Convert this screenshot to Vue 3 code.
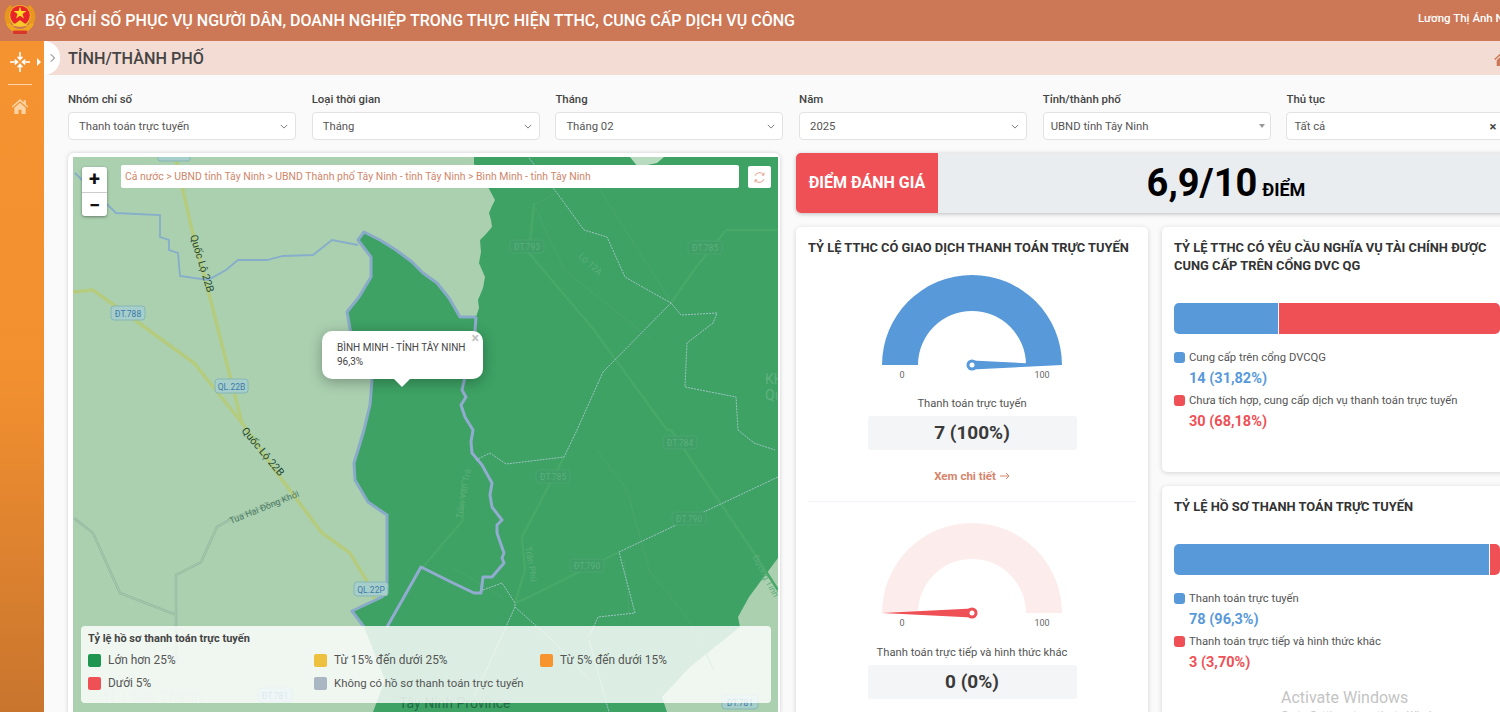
<template>
  <div class="page">
    <header class="topbar">
      <svg class="emblem" viewBox="0 0 32 32">
        <path d="M3 22C-1 15 0 7 6 2l3 2c-5 5-5 11-2 16zM29 22c4-7 3-15-3-20l-3 2c5 5 5 11 2 16z" fill="#e9961f" />
        <path d="M2 21c3 6 8 9 14 9s11-3 14-9l-4-1c-3 4-6 6-10 6s-7-2-10-6z" fill="#f0a61e" />
        <circle cx="16" cy="13" r="11" fill="#f2b324" />
        <circle cx="16" cy="12.500" r="9.800" fill="#e8232a" />
        <path d="M16 3.500l1.500 4.600h4.900l-3.900 2.900 1.500 4.600-4-2.900-4 2.900 1.500-4.600-3.900-2.900h4.900z" fill="#fbd924" />
        <path d="M8 23l8-6 8 6z" fill="#f8c52b" />
        <rect x="9" y="27.500" width="14" height="3.500" rx="1" fill="#d8362a" />
      </svg>
      <h1 class="topbar-title">BỘ CHỈ SỐ PHỤC VỤ NGƯỜI DÂN, DOANH NGHIỆP TRONG THỰC HIỆN TTHC, CUNG CẤP DỊCH VỤ CÔNG</h1>
      <div class="topbar-user">Lương Thị Ánh N</div>
    </header>

    <div class="layout">
      <aside class="sidebar">
        <div class="side-item">
          <svg class="side-icon" viewBox="0 0 20 20" fill="none" stroke="#fff" stroke-width="1.500">
            <path d="M10 0v7M7.600 4.800L10 7.600l2.400-2.800M10 20v-7M7.600 15.200l2.400-2.800 2.400 2.800M0 10h7M4.800 7.600L7.600 10l-2.800 2.400M20 10h-7M15.200 7.600L12.400 10l2.800 2.400" />
          </svg>
          <span class="side-caret"></span>
        </div>
        <div class="side-line"></div>
        <svg class="side-home" viewBox="0 0 20 18">
          <path d="M10 0L0 9l1.200 1.300L10 2.600l8.800 7.700L20 9l-3-2.700V1.500h-2.600v2.500zM3.200 10.600V18h5v-5h3.600v5h5v-7.400L10 4.600z" fill="#fcd3a4" />
        </svg>
      </aside>

      <main class="main">
        <div class="subbar">
          <span class="toggle">
            <svg viewBox="0 0 8 12" width="6" height="10" fill="none" stroke="#666" stroke-width="1.300"><path d="M1 1l5 5-5 5" /></svg>
          </span>
          <h2 class="subbar-title">TỈNH/THÀNH PHỐ</h2>
          <svg class="subbar-home" viewBox="0 0 20 18">
            <path d="M10 0L0 9l1.200 1.300L10 2.600l8.800 7.700L20 9l-3-2.700V1.500h-2.600v2.500zM3.200 10.600V18h5v-5h3.600v5h5v-7.400L10 4.600z" fill="#cc7755" />
          </svg>
        </div>

        <div class="content">
          <section class="filters">
            <div v-for="f in filters" :key="f.label" class="filter">
              <label class="filter-label">{{ f.label }}</label>
              <div class="select" :class="'select-' + f.kind">
                <span>{{ f.value }}</span>
                <svg v-if="f.kind === 'chev'" viewBox="0 0 10 6" width="8" height="5" fill="none" stroke="#777" stroke-width="1.200"><path d="M1 1l4 4 4-4" /></svg>
                <span v-else-if="f.kind === 'tri'" class="tri"></span>
                <span v-else class="clear">×</span>
              </div>
            </div>
          </section>

          <section class="panels">
            <div class="map-card">
              <div class="map">
                <svg class="map-svg" viewBox="73 157 705 555">
                  <rect x="73" y="157" width="705" height="555" fill="#abd0b0" />
                  <g fill="none" stroke="#b5cc7e" stroke-width="3.500">
                    <path d="M176 160L192 230 208 290 242 423 277 473 322 533 350 553 368 583 387 627" />
                    <path d="M73 292L93 290 139 323 194 363 242 423" />
                  </g>
                  <g fill="none" stroke="#93b8a0" stroke-width="2.500">
                    <path d="M74 518L93 533 120 593 176 615 176 575 201 562 217 527 231 519 290 497" />
                    <path d="M176 615V660" />
                  </g>
                  <g fill="none" stroke="#abd0b0" stroke-width="0.800">
                    <path d="M74 518L93 533 120 593 176 615 176 575 201 562 217 527 231 519 290 497" />
                    <path d="M176 615V660" />
                  </g>
                  <path d="M75 173L116 213 160 215 160 237 169 240 169 250 178 253 180 276 208 280 226 270 238 260 267 260 283 256 313 255 332 240 358 245" fill="none" stroke="#86aecb" stroke-width="1.800" />

                  <path d="M474 157L474 164 480 172 488 187 495 200 492 206 489 213 491 220 492 227 486 234 480 240 481 252 479 263 485 277 483 288 478 300 479 308 476 317 460 317 449 298 437 283 423 273 412 262 396 250 380 240 364 232 358 240 371 257 371 277 359 297 347 312 352 340 372 380 370 405 364 430 354 463 355 480 368 502 387 515 387 587 382 597 352 611 364 627 374 652 385 680 373 712 667 712 662 697 690 667 740 627 738 617 749 597 778 558V157z" fill="#3da264" />
                  <path d="M630 157h34l-7 6-19 4z" fill="#b9dcc1" />

                  <g fill="none" stroke="#47a868" stroke-width="2.500">
                    <path d="M534 203L529 253 594 330 667 430 671 430 754 553 778 590" />
                    <path d="M694 270L671 303M726 230l-32 40M726 230h52" />
                    <path d="M564 457L522 537 525 570 515 603" />
                    <path d="M619 552L529 597 515 603" />
                    <path d="M463 520L423 567M463 520l-1 -40" />
                  </g>
                  <g fill="none" stroke="#4aa56c" stroke-width="1">
                    <path d="M534 205l22-12M534 205l30 65 88 70M600 190l70 110" />
                    <path d="M597 450l30 40 22 80 40 50 25 50" />
                    <path d="M452 567l50 30M624 560l6 60" />
                  </g>

                  <g fill="none" stroke="#92abd0" stroke-width="3" stroke-linejoin="round">
                    <path d="M476 317L474 345 470 355 462 390 466 397 461 405 465 417 473 430 471 442 472 453 482 465 492 483 490 495 492 507 502 520 497 525 497 533 504 553 502 558 504 563 492 577 483 577 481 593 474 593 451 582 421 567 387 627" />
                  </g>
                  <path d="M476 317L460 317 449 298 437 283 423 273 412 262 396 250 380 240 364 232 358 240 371 257 371 277 359 297 347 312 352 340 372 380 370 405 364 430 354 463 355 480 368 502 387 515 387 587 382 597 352 611 364 627" fill="none" stroke="#8aaac9" stroke-width="3" stroke-linejoin="round" />

                  <g fill="none" stroke="#a0c4c6" stroke-width="1" stroke-dasharray="2 1">
                    <path d="M529 158L557 193 584 230 607 237 625 277 653 293 671 303 681 315 717 313 713 323 687 343 685 387 736 397 738 430 754 443 775 450" />
                    <path d="M671 303L603 372 577 430 564 457 506 464 490 453 476 460" />
                    <path d="M778 477L619 552 635 613 598 617 589 637" />
                    <path d="M483 590L502 583 515 603 515 607 552 640 590 680M515 607L474 697M589 640l20 72" />
                  </g>

                  <g class="shield">
                    <rect x="158" y="155" width="32" height="6" rx="2" />
                    <rect x="111" y="306" width="34" height="14" rx="3" />
                    <text x="128" y="317">ĐT.788</text>
                    <rect x="215" y="379" width="33" height="14" rx="3" />
                    <text x="231.500" y="390">QL.22B</text>
                    <rect x="354" y="582" width="34" height="14" rx="3" />
                    <text x="371" y="593">QL.22P</text>
                  </g>
                  <g class="shield dim">
                    <rect x="510" y="240" width="34" height="13" rx="3" />
                    <text x="527" y="250">ĐT.793</text>
                    <rect x="688" y="241" width="34" height="13" rx="3" />
                    <text x="705" y="251">ĐT.785</text>
                    <rect x="663" y="436" width="34" height="13" rx="3" />
                    <text x="680" y="446">ĐT.784</text>
                    <rect x="536" y="470" width="34" height="13" rx="3" />
                    <text x="553" y="480">ĐT.785</text>
                    <rect x="672" y="512" width="34" height="13" rx="3" />
                    <text x="689" y="522">ĐT.790</text>
                    <rect x="570" y="559" width="34" height="13" rx="3" />
                    <text x="587" y="569">ĐT.790</text>
                  </g>

                  <text class="road-name" transform="translate(190 236) rotate(73)">Quốc Lộ 22B</text>
                  <text class="road-name" transform="translate(241 431) rotate(50)">Quốc Lộ 22B</text>
                  <text class="road-name small" transform="translate(231 524) rotate(-22)">Tua Hai Đồng Khởi</text>
                  <text class="road-dim" transform="translate(462 519) rotate(-80)">Trần Văn Trà</text>
                  <text class="road-dim" transform="translate(525 547) rotate(80)">Trần Phú</text>
                  <text class="road-dim" transform="translate(752 557) rotate(62)">Đường Tỉnh</text>
                  <text class="road-dim" transform="translate(578 257) rotate(42)">Lộ 12A</text>
                  <text class="area-name" x="765" y="384">KH</text>
                  <text class="area-name" x="765" y="400">Qu</text>
                  <text class="town" x="104" y="702">H. Châu Thành</text>
                  <text class="town dark" x="399" y="708">Tây Ninh Province</text>
                  <g class="shield">
                    <rect x="258" y="688" width="34" height="14" rx="3" />
                    <text x="275" y="699">ĐT.781</text>
                    <rect x="722" y="695" width="36" height="14" rx="3" />
                    <text x="740" y="706">ĐT.781</text>
                  </g>
                </svg>

                <div class="zoom-ctl">
                  <button class="zoom-btn">+</button>
                  <button class="zoom-btn">−</button>
                </div>
                <div class="crumbs">Cả nước &gt; UBND tỉnh Tây Ninh &gt; UBND Thành phố Tây Ninh - tỉnh Tây Ninh &gt; Bình Minh - tỉnh Tây Ninh</div>
                <button class="reload">
                  <svg viewBox="0 0 16 16" width="13" height="13" fill="none" stroke="#d98a70" stroke-width="1">
                    <path d="M2.500 6A6 6 0 0 1 13 4.500M13.500 10A6 6 0 0 1 3 11.500" />
                    <path d="M13.500 2v3h-3M2.500 14v-3h3" />
                  </svg>
                </button>

                <div class="popup">
                  <span class="popup-close">×</span>
                  <div>BÌNH MINH - TỈNH TÂY NINH</div>
                  <div>96,3%</div>
                </div>

                <div class="legend">
                  <div class="legend-title">Tỷ lệ hồ sơ thanh toán trực tuyến</div>
                  <div class="legend-grid">
                    <div v-for="l in legend" :key="l.text" class="legend-item" :class="l.cls">
                      <i class="legend-dot" :style="{ background: l.color }"></i>{{ l.text }}
                    </div>
                  </div>
                </div>
              </div>
            </div>

            <div class="right">
              <div class="score">
                <div class="score-label">ĐIỂM ĐÁNH GIÁ</div>
                <div class="score-value"><b>6,9/10</b><span>ĐIỂM</span></div>
              </div>

              <div class="cards">
                <div class="card gauges">
                  <h3 class="card-title">TỶ LỆ TTHC CÓ GIAO DỊCH THANH TOÁN TRỰC TUYẾN</h3>
                  <div class="gauge first">
                    <svg viewBox="0 0 200 110" width="200" height="110">
                      <path d="M10 100a90 90 0 0 1 180 0h-36a54 54 0 0 0 -108 0z" fill="#5899da" />
                      <path d="M100 95.500L190 100 100 104.500z" fill="#5899da" />
                      <circle cx="100" cy="100" r="4" fill="#fff" stroke="#5899da" stroke-width="3" />
                      <text x="30" y="113">0</text>
                      <text x="170" y="113">100</text>
                    </svg>
                  </div>
                  <div class="gauge-name">Thanh toán trực tuyến</div>
                  <div class="gauge-value">7 (100%)</div>
                  <a class="more">Xem chi tiết <svg viewBox="0 0 10 8" width="10" height="8" fill="none" stroke="#d6846a" stroke-width="1"><path d="M0 4h9M6 1l3 3-3 3" /></svg></a>
                  <div class="divider"></div>
                  <div class="gauge">
                    <svg viewBox="0 0 200 110" width="200" height="110">
                      <path d="M10 100a90 90 0 0 1 180 0h-36a54 54 0 0 0 -108 0z" fill="#fdecec" />
                      <path d="M100 95.500L10 100 100 104.500z" fill="#ef5055" />
                      <circle cx="100" cy="100" r="4" fill="#fff" stroke="#ef5055" stroke-width="3" />
                      <text x="30" y="113">0</text>
                      <text x="170" y="113">100</text>
                    </svg>
                  </div>
                  <div class="gauge-name lower">Thanh toán trực tiếp và hình thức khác</div>
                  <div class="gauge-value">0 (0%)</div>
                </div>

                <div class="stack">
                  <div v-for="c in barCards" :key="c.title" class="card bar-card" :class="c.cls">
                    <h3 class="card-title">{{ c.title }}</h3>
                    <div class="bar">
                      <span class="bar-a" :style="{ width: c.share + '%' }"></span>
                      <span class="bar-b"></span>
                    </div>
                    <div v-for="r in c.rows" :key="r.name" class="bar-row" :class="r.tone">
                      <div class="bar-name"><i></i>{{ r.name }}</div>
                      <div class="bar-num">{{ r.value }}</div>
                    </div>
                  </div>
                </div>
              </div>
            </div>
          </section>
        </div>
      </main>
    </div>

    <div class="watermark">
      <div>Activate Windows</div>
      <small>Go to Settings to activate Windows.</small>
    </div>
  </div>
</template>

<script setup>
const filters = [
  { label: 'Nhóm chỉ số', value: 'Thanh toán trực tuyến', kind: 'chev' },
  { label: 'Loại thời gian', value: 'Tháng', kind: 'chev' },
  { label: 'Tháng', value: 'Tháng 02', kind: 'chev' },
  { label: 'Năm', value: '2025', kind: 'chev' },
  { label: 'Tỉnh/thành phố', value: 'UBND tỉnh Tây Ninh', kind: 'tri' },
  { label: 'Thủ tục', value: 'Tất cả', kind: 'clr' },
]

const legend = [
  { text: 'Lớn hơn 25%', color: '#1e9650' },
  { text: 'Từ 15% đến dưới 25%', color: '#eec03f' },
  { text: 'Từ 5% đến dưới 15%', color: '#f7942d' },
  { text: 'Dưới 5%', color: '#ef5055' },
  { text: 'Không có hồ sơ thanh toán trực tuyến', color: '#aab6c2', cls: 'tight' },
]

const barCards = [
  {
    title: 'TỶ LỆ TTHC CÓ YÊU CẦU NGHĨA VỤ TÀI CHÍNH ĐƯỢC CUNG CẤP TRÊN CỔNG DVC QG',
    cls: 'tall',
    share: 31.82,
    rows: [
      { name: 'Cung cấp trên cổng DVCQG', value: '14 (31,82%)', tone: 'blue' },
      { name: 'Chưa tích hợp, cung cấp dịch vụ thanh toán trực tuyến', value: '30 (68,18%)', tone: 'red' },
    ],
  },
  {
    title: 'TỶ LỆ HỒ SƠ THANH TOÁN TRỰC TUYẾN',
    cls: 'short',
    share: 96.6,
    rows: [
      { name: 'Thanh toán trực tuyến', value: '78 (96,3%)', tone: 'blue' },
      { name: 'Thanh toán trực tiếp và hình thức khác', value: '3 (3,70%)', tone: 'red' },
    ],
  },
]
</script>

<style>
html,
body {
  margin: 0;
  overflow: hidden;
  background: #fafafa;
}
</style>

<style scoped>
* {
  box-sizing: border-box;
}

.page {
  position: relative;
  width: 1500px;
  height: 712px;
  overflow: hidden;
  font-family: Roboto, 'Liberation Sans', sans-serif;
  color: #444;
  background: #fafafa;
}

.topbar {
  display: flex;
  align-items: center;
  height: 41px;
  background: #cc7755;
  color: #fff;
}

.emblem {
  width: 32px;
  height: 32px;
  margin: 0 9px 4px 4px;
  flex-shrink: 0;
}

.topbar-title {
  flex: 1;
  margin: 0;
  font-size: 16.060px;
  font-weight: 500;
  white-space: nowrap;
}

.topbar-user {
  width: 82px;
  margin-bottom: 5px;
  font-size: 11.500px;
  font-weight: 500;
  white-space: nowrap;
  overflow: hidden;
}

.layout {
  display: flex;
  height: 671px;
}

.sidebar {
  display: flex;
  flex-direction: column;
  align-items: center;
  flex-shrink: 0;
  width: 44px;
  padding: 11px 4px 0 0;
  background: linear-gradient(180deg, #f59331 0%, #f29030 50%, #c9752e 100%);
}

.side-item {
  position: relative;
  height: 20px;
}

.side-icon {
  display: block;
  width: 20px;
  height: 20px;
}

.side-caret {
  position: absolute;
  left: 27px;
  top: 6px;
  border-left: 4px solid #fff;
  border-top: 4px solid transparent;
  border-bottom: 4px solid transparent;
}

.side-line {
  width: 24px;
  height: 1px;
  margin: 12px 0 14px;
  background: rgba(255, 255, 255, 0.6);
}

.side-home {
  width: 18px;
  height: 15px;
}

.main {
  flex: 1;
  min-width: 0;
}

.subbar {
  position: relative;
  display: flex;
  align-items: center;
  height: 34px;
  padding-left: 24px;
  background: #f3dcd4;
}

.toggle {
  position: absolute;
  left: 0;
  top: 0;
  display: flex;
  align-items: center;
  justify-content: flex-end;
  width: 16px;
  height: 34px;
  padding-right: 4px;
  background: #fff;
  border-radius: 0 17px 17px 0;
}

.subbar-title {
  margin: 0;
  font-size: 16.200px;
  font-weight: 500;
  color: #444;
}

.subbar-home {
  position: absolute;
  left: 1449px;
  top: 11px;
  width: 18px;
  height: 14px;
}

.content {
  width: 1494px;
  padding: 16px 0 0 24px;
}

.filters {
  display: grid;
  grid-template-columns: repeat(6, 228px);
  column-gap: 15.700px;
}

.filter-label {
  display: block;
  height: 21px;
  font-size: 11.400px;
  font-weight: 500;
  line-height: 16px;
  color: #444;
}

.select {
  display: flex;
  align-items: center;
  justify-content: space-between;
  height: 28px;
  padding: 0 7px 0 10px;
  background: #fff;
  border: 1px solid #e2e2e2;
  border-radius: 4px;
  font-size: 11.300px;
  color: #555;
}

.select-clr {
  padding: 0 17px 0 7px;
}

.select-tri {
  padding: 0 5px 0 7px;
}

.tri {
  border-top: 4px solid #999;
  border-left: 3.500px solid transparent;
  border-right: 3.500px solid transparent;
}

.clear {
  font-size: 13px;
  font-weight: 700;
  color: #444;
}

.panels {
  display: flex;
  gap: 16px;
  margin-top: 13px;
}

.map-card {
  width: 712px;
  height: 563px;
  flex-shrink: 0;
  padding: 4px 2px 4px 5px;
  background: #fff;
  border-radius: 6px;
  box-shadow: 0 0 4px rgba(0, 0, 0, 0.18);
}

.map {
  position: relative;
  width: 705px;
  height: 555px;
  overflow: hidden;
}

.map-svg {
  display: block;
  width: 705px;
  height: 555px;
}

.shield rect {
  fill: #a6cfcb;
  stroke: #86b6b4;
}

.shield text {
  font-size: 8.500px;
  text-anchor: middle;
  fill: #3e79a8;
}

.shield.dim rect {
  fill: #3f9f66;
  stroke: #4aa56e;
}

.shield.dim text {
  fill: #5cb07c;
}

.road-name {
  font-size: 10.500px;
  fill: #1f4a35;
}

.road-name.small {
  font-size: 9px;
  fill: #4c7a63;
}

.road-dim {
  font-size: 9px;
  fill: #5cae7a;
}

.area-name {
  font-size: 14px;
  fill: #5fb07f;
}

.town {
  font-size: 15px;
  fill: #a9bfb0;
}

.town.dark {
  fill: #1f6a43;
  font-size: 14px;
}

.zoom-ctl {
  position: absolute;
  left: 9px;
  top: 10px;
  display: flex;
  flex-direction: column;
  width: 25px;
  background: #fff;
  border-radius: 3px;
  box-shadow: 0 1px 3px rgba(0, 0, 0, 0.4);
}

.zoom-btn {
  width: 25px;
  height: 24.500px;
  padding: 0;
  border: 0;
  background: none;
  font: 700 20px/24px Roboto, sans-serif;
  color: #111;
}

.zoom-btn + .zoom-btn {
  border-top: 1px solid #ccc;
}

.crumbs {
  position: absolute;
  left: 48px;
  top: 8px;
  width: 618px;
  height: 23px;
  padding: 0 4px;
  background: #fff;
  border-radius: 2px;
  font-size: 10.450px;
  line-height: 23px;
  color: #d0866b;
  white-space: nowrap;
}

.reload {
  position: absolute;
  left: 675px;
  top: 9px;
  display: flex;
  align-items: center;
  justify-content: center;
  width: 23px;
  height: 22px;
  padding: 0;
  border: 0;
  border-radius: 2px;
  background: #fff;
}

.popup {
  position: absolute;
  left: 249px;
  top: 174px;
  width: 161px;
  height: 48px;
  padding: 10px 15px 0;
  background: #fff;
  border-radius: 10px;
  box-shadow: 0 3px 14px rgba(0, 0, 0, 0.3);
  font-size: 10px;
  line-height: 14px;
  color: #444;
}

.popup::after {
  content: '';
  position: absolute;
  left: 72px;
  top: 48px;
  border-top: 8px solid #fff;
  border-left: 8px solid transparent;
  border-right: 8px solid transparent;
}

.popup-close {
  position: absolute;
  right: 4px;
  top: 0;
  font-size: 14px;
  font-weight: 700;
  color: #c3c3c3;
}

.legend {
  position: absolute;
  left: 8px;
  top: 469px;
  width: 690px;
  height: 77px;
  padding: 5px 7px;
  background: rgba(255, 255, 255, 0.82);
  border-radius: 4px;
}

.legend-title {
  height: 16px;
  margin-bottom: 6px;
  font-size: 11px;
  font-weight: 700;
  line-height: 16px;
  color: #444;
}

.legend-grid {
  display: grid;
  grid-template-columns: repeat(3, 226px);
  row-gap: 9px;
}

.legend-item {
  display: flex;
  align-items: center;
  gap: 7px;
  height: 14px;
  font-size: 11.900px;
  color: #555;
}

.legend-item.tight {
  font-size: 11.400px;
}

.legend-dot {
  width: 13px;
  height: 13px;
  border-radius: 2px;
  flex-shrink: 0;
}

.right {
  width: 718px;
  flex-shrink: 0;
}

.score {
  display: flex;
  height: 60px;
  overflow: hidden;
  background: #e9edf0;
  border-radius: 5px;
  box-shadow: 0 1px 4px rgba(0, 0, 0, 0.25);
}

.score-label {
  width: 142px;
  background: #ef5055;
  color: #fff;
  font-size: 16px;
  font-weight: 700;
  line-height: 60px;
  text-align: center;
}

.score-value {
  flex: 1;
  display: flex;
  align-items: baseline;
  justify-content: center;
  gap: 5px;
  color: #000;
  line-height: 60px;
}

.score-value b {
  font-size: 38px;
  font-weight: 700;
}

.score-value span {
  font-size: 18px;
  font-weight: 700;
}

.cards {
  display: flex;
  gap: 14px;
  margin-top: 14px;
}

.card {
  background: #fff;
  border-radius: 5px;
  box-shadow: 0 1px 5px rgba(0, 0, 0, 0.16);
  padding: 12px;
}

.card-title {
  margin: 0;
  font-size: 12.880px;
  font-weight: 700;
  line-height: 18px;
  color: #333;
}

.gauges {
  width: 352px;
  height: 500px;
}

.gauge {
  height: 114px;
  margin-top: 11px;
  text-align: center;
}

.gauge.first {
  height: 117px;
  margin-top: 8px;
}

.gauge svg {
  overflow: visible;
}

.gauge text {
  font-size: 9px;
  fill: #666;
  text-anchor: middle;
}

.gauge-name {
  margin-top: 14px;
  font-size: 11.200px;
  line-height: 16px;
  text-align: center;
  color: #555;
}

.gauge-name.lower {
  margin-top: 18px;
}

.gauge-value {
  width: 209px;
  height: 34px;
  margin: 4px auto 0;
  background: #f4f5f7;
  border-radius: 3px;
  font-size: 19px;
  font-weight: 700;
  line-height: 34px;
  text-align: center;
  color: #3a3a3a;
}

.more {
  display: flex;
  align-items: center;
  justify-content: center;
  gap: 4px;
  margin-top: 18px;
  font-size: 11.500px;
  font-weight: 700;
  line-height: 16px;
  color: #d6846a;
}

.divider {
  height: 1px;
  margin-top: 17px;
  background: #f1f4fa;
}

.stack {
  display: flex;
  flex-direction: column;
  gap: 14px;
  width: 352px;
}

.bar-card.tall {
  height: 245px;
}

.bar-card.short {
  height: 240px;
}

.bar {
  display: flex;
  gap: 1px;
  width: 326px;
  height: 31px;
  margin: 28px 0 15px;
  overflow: hidden;
  border-radius: 5px;
}

.bar-a {
  background: #5899da;
}

.bar-b {
  flex: 1;
  background: #ef5055;
}

.bar-row {
  height: 43px;
}

.bar-name {
  display: flex;
  align-items: center;
  gap: 4px;
  height: 16px;
  font-size: 11.250px;
  color: #555;
}

.bar-name i {
  width: 11px;
  height: 11px;
  border-radius: 3px;
}

.bar-num {
  margin: 5px 0 0 15px;
  font-size: 14.500px;
  font-weight: 700;
  line-height: 18px;
}

.blue .bar-name i {
  background: #5899da;
}

.blue .bar-num {
  color: #5899da;
}

.red .bar-name i {
  background: #ef5055;
}

.red .bar-num {
  color: #ef5055;
}

.watermark {
  position: absolute;
  left: 1281px;
  top: 689px;
  font-size: 16px;
  line-height: 18px;
  color: #c4c4c4;
  white-space: nowrap;
}

.watermark small {
  display: block;
  margin-top: 2px;
  font-size: 11px;
  line-height: 14px;
}
</style>
